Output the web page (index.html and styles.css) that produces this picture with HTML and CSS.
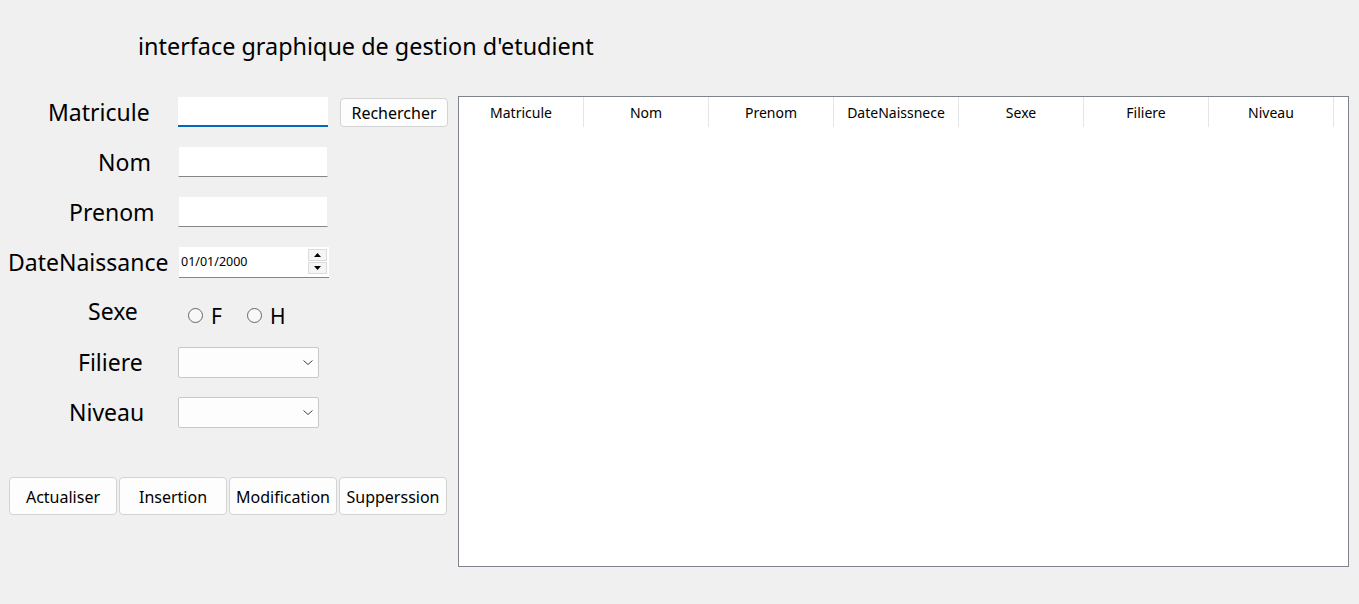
FILE: index.html
```html
<!DOCTYPE html>
<html lang="fr">
<head>
<meta charset="utf-8">
<title>Gestion d'etudient</title>
<link rel="stylesheet" href="styles.css">
</head>
<body>
<div class="app">
  <h1 class="title">interface graphique de gestion d'etudient</h1>
  <div class="main">
    <form class="form">
      <div class="row">
        <label class="lbl lbl-mat">Matricule</label>
        <input class="field field-focus" type="text">
        <button type="button" class="btn btn-search">Rechercher</button>
      </div>
      <div class="row">
        <label class="lbl lbl-nom">Nom</label>
        <input class="field" type="text">
      </div>
      <div class="row">
        <label class="lbl lbl-pre">Prenom</label>
        <input class="field" type="text">
      </div>
      <div class="row">
        <label class="lbl lbl-date">DateNaissance</label>
        <div class="spin">
          <span class="spin-text">01/01/2000</span>
          <div class="spin-btns">
            <span class="spin-btn"><svg width="7" height="4" viewBox="0 0 7 4"><path d="M0 4 L3.5 0 L7 4 Z" fill="#000"/></svg></span>
            <span class="spin-btn"><svg width="7" height="4" viewBox="0 0 7 4"><path d="M0 0 L3.5 4 L7 0 Z" fill="#000"/></svg></span>
          </div>
        </div>
      </div>
      <div class="row">
        <label class="lbl lbl-sexe">Sexe</label>
        <div class="radios">
          <span class="radio"><span class="dot"></span>F</span>
          <span class="radio"><span class="dot"></span>H</span>
        </div>
      </div>
      <div class="row">
        <label class="lbl lbl-fil">Filiere</label>
        <div class="combo"><svg width="10" height="5" viewBox="0 0 10 5"><path d="M0.5 0.5 L5 4.5 L9.5 0.5" fill="none" stroke="#444" stroke-width="1"/></svg></div>
      </div>
      <div class="row">
        <label class="lbl lbl-niv">Niveau</label>
        <div class="combo"><svg width="10" height="5" viewBox="0 0 10 5"><path d="M0.5 0.5 L5 4.5 L9.5 0.5" fill="none" stroke="#444" stroke-width="1"/></svg></div>
      </div>
      <div class="actions">
        <button type="button" class="btn btn-act">Actualiser</button>
        <button type="button" class="btn btn-act">Insertion</button>
        <button type="button" class="btn btn-act">Modification</button>
        <button type="button" class="btn btn-act">Supperssion</button>
      </div>
    </form>
    <div class="table">
      <div class="thead">
        <div class="th">Matricule</div>
        <div class="th">Nom</div>
        <div class="th">Prenom</div>
        <div class="th">DateNaissnece</div>
        <div class="th">Sexe</div>
        <div class="th">Filiere</div>
        <div class="th">Niveau</div>
      </div>
    </div>
  </div>
</div>
</body>
</html>
```

FILE: styles.css
```css
* { box-sizing: border-box; }
html, body { margin: 0; padding: 0; }
body {
  background: #f0f0f0;
  font-family: "Noto Sans", "Open Sans", sans-serif;
  color: #000;
  width: 1359px;
  height: 604px;
  overflow: hidden;
}
.title {
  margin: 0;
  padding: 31px 0 0 138px;
  height: 87px;
  font-size: 23.4px;
  font-weight: 400;
  line-height: 30px;
}
.main {
  display: flex;
  align-items: flex-start;
}
.form {
  width: 458px;
  margin: 0;
}
.row {
  height: 50px;
  display: flex;
  align-items: center;
}
.lbl {
  width: 178px;
  font-size: 23px;
  line-height: 30px;
  white-space: nowrap;
}
.lbl-mat { padding-left: 48px; }
.lbl-nom { padding-left: 98px; }
.lbl-pre { padding-left: 69px; }
.lbl-date { padding-left: 8px; }
.lbl-sexe { padding-left: 88px; margin-top: -2px; }
.lbl-fil { padding-left: 78px; }
.lbl-niv { padding-left: 69px; }
.field {
  width: 150px;
  height: 30px;
  margin: 0;
  background: #fff;
  border: 0;
  border-left: 1px solid #f0f0f0;
  border-right: 1px solid #f0f0f0;
  border-bottom: 1px solid #868686;
  outline: none;
  padding: 0 4px;
  font: inherit;
}
.field-focus {
  border-left: 0;
  border-right: 0;
  border-bottom: 2px solid #0067c0;
}
.btn {
  font-family: inherit;
  font-size: 16px;
  color: #000;
  background: #fdfdfd;
  border: 1px solid #d3d3d3;
  border-radius: 4px;
  padding: 0;
  margin: 0;
}
.btn-search {
  margin-left: 12px;
  width: 108px;
  height: 29px;
  line-height: 26px;
  padding-top: 1px;
}
.spin {
  width: 150px;
  height: 31px;
  margin-left: 1px;
  background: #fff;
  border-bottom: 1px solid #868686;
  display: flex;
  align-items: center;
  justify-content: space-between;
  padding: 0 2px 0 2px;
}
.spin-text {
  font-size: 12.5px;
}
.spin-btns {
  display: flex;
  flex-direction: column;
  gap: 1px;
  margin-top: -1px;
}
.spin-btn {
  width: 19px;
  height: 12px;
  background: #f5f5f5;
  border: 1px solid #dcdcdc;
  display: flex;
  align-items: center;
  justify-content: center;
}
.radios {
  display: flex;
  gap: 25px;
  margin-left: 10px;
  margin-top: 7px;
}
.radio {
  display: flex;
  align-items: center;
  gap: 8px;
  font-size: 21px;
  line-height: 24px;
}
.dot {
  width: 15px;
  height: 15px;
  border: 1px solid #666;
  border-radius: 50%;
  background: #f8f8f8;
}
.combo {
  width: 141px;
  height: 31px;
  background: #fdfdfd;
  border: 1px solid #c9c9c9;
  border-radius: 2px;
  display: flex;
  align-items: center;
  justify-content: flex-end;
  padding-right: 5px;
}
.actions {
  display: flex;
  gap: 2px;
  margin: 40px 0 0 9px;
}
.btn-act {
  width: 108px;
  height: 38px;
  padding-top: 2px;
}
.table {
  margin-top: 9px;
  width: 891px;
  height: 471px;
  background: #fff;
  border: 1px solid #7e838c;
}
.thead {
  display: flex;
  height: 30px;
}
.th {
  width: 125px;
  border-right: 1px solid #e5e5e5;
  font-size: 14px;
  text-align: center;
  line-height: 31px;
  color: #000;
}
```
